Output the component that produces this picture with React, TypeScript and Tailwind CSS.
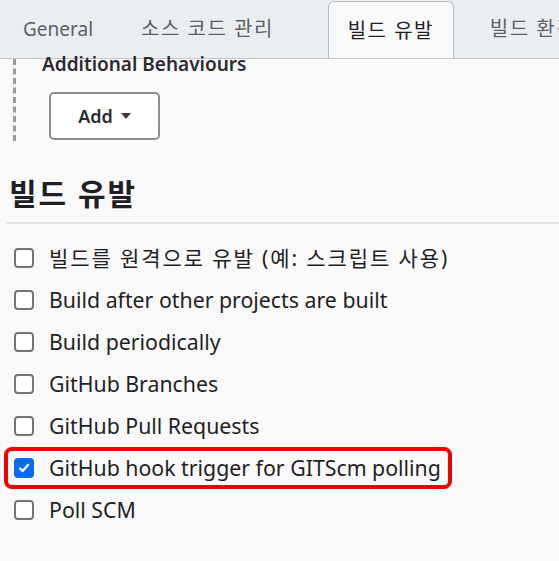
import React from 'react';

const triggers = [
  { label: '빌드를 원격으로 유발 (예: 스크립트 사용)', checked: false, ko: true },
  { label: 'Build after other projects are built', checked: false },
  { label: 'Build periodically', checked: false },
  { label: 'GitHub Branches', checked: false },
  { label: 'GitHub Pull Requests', checked: false },
  { label: 'GitHub hook trigger for GITScm polling', checked: true, highlight: true },
  { label: 'Poll SCM', checked: false },
];

function Checkbox({ checked }: { checked: boolean }) {
  if (checked) {
    return (
      <span className="flex h-[20px] w-[20px] shrink-0 items-center justify-center rounded-[4px] bg-[#0b6cf0]">
        <svg viewBox="0 0 16 16" className="h-[14px] w-[14px]" fill="none" stroke="white" strokeWidth="2.6" strokeLinecap="round" strokeLinejoin="round">
          <path d="M3.5 8.5l3 3 6-7" />
        </svg>
      </span>
    );
  }
  return <span className="h-[20px] w-[20px] shrink-0 rounded-[4px] border-2 border-[#767676] bg-white" />;
}

export default function App() {
  return (
    <div className="h-[561px] w-[559px] overflow-hidden bg-[#f9f9f9] font-['Noto_Sans','Noto_Sans_CJK_KR',sans-serif] text-[#1f1f24]">
      {/* Tab bar */}
      <div className="flex h-[59px] items-end overflow-hidden whitespace-nowrap border-b border-[#c4c8cc] bg-[#ebeef1] pl-[23px]">
        <div className="flex h-[58px] shrink-0 items-center text-[19px] text-[#5b5f66]">General</div>
        <div className="ml-[48px] flex h-[58px] shrink-0 items-center text-[20px] tracking-[1.5px] text-[#5b5f66]">소스 코드 관리</div>
        <div className="relative -mb-px ml-[54px] flex h-[58px] w-[126px] shrink-0 items-center justify-center rounded-t-[6px] border border-b-0 border-[#b6bcc2] bg-[#f9f9f9] text-[20px] tracking-[1.5px] text-[#1f1f24]">
          빌드 유발
        </div>
        <div className="ml-[36px] flex h-[58px] shrink-0 items-center text-[20px] tracking-[1.5px] text-[#5b5f66]">빌드 환경</div>
      </div>

      {/* Additional behaviours block */}
      <div className="ml-[13px] flex">
        <div className="h-[82px] border-l-[3px] border-dashed border-[#9a9a9a]" />
        <div className="pl-[26px]">
          <div className="-mt-[8px] text-[19px] font-semibold leading-[26px] text-[#2b2b30]">Additional Behaviours</div>
          <button className="mt-[15px] ml-[7px] flex h-[48px] w-[111px] items-center justify-center gap-[8px] rounded-[5px] border-2 border-[#8a9096] bg-white text-[18px] font-semibold text-[#2b2b30]">
            Add
            <svg viewBox="0 0 10 6" className="h-[6px] w-[10px]" fill="#3a3a40">
              <path d="M0 0h10L5 6z" />
            </svg>
          </button>
        </div>
      </div>

      {/* Section heading */}
      <div className="ml-[7px] mt-[33px] border-b-2 border-[#e1e1e1] pb-[8px]">
        <h2 className="pl-[2px] text-[30px] font-bold leading-[40px] tracking-[2px] text-[#1f1f24]">빌드 유발</h2>
      </div>

      {/* Trigger list */}
      <div className="mt-[13px] flex flex-col">
        {triggers.map((t) => (
          <div key={t.label} className="flex h-[42px] items-center">
            <div
              className={`ml-[4px] flex h-[42px] items-center gap-[15px] pr-[8px] ${
                t.highlight ? 'w-[448px] rounded-[8px] border-[4px] border-[#f00000] pl-[6px]' : 'pl-[10px]'
              }`}
            >
              <Checkbox checked={t.checked} />
              <span
                className={`whitespace-nowrap leading-none ${
                  t.ko ? 'text-[21px] tracking-[1.9px]' : 'text-[21.3px]'
                }`}
              >
                {t.label}
              </span>
            </div>
          </div>
        ))}
      </div>
    </div>
  );
}
